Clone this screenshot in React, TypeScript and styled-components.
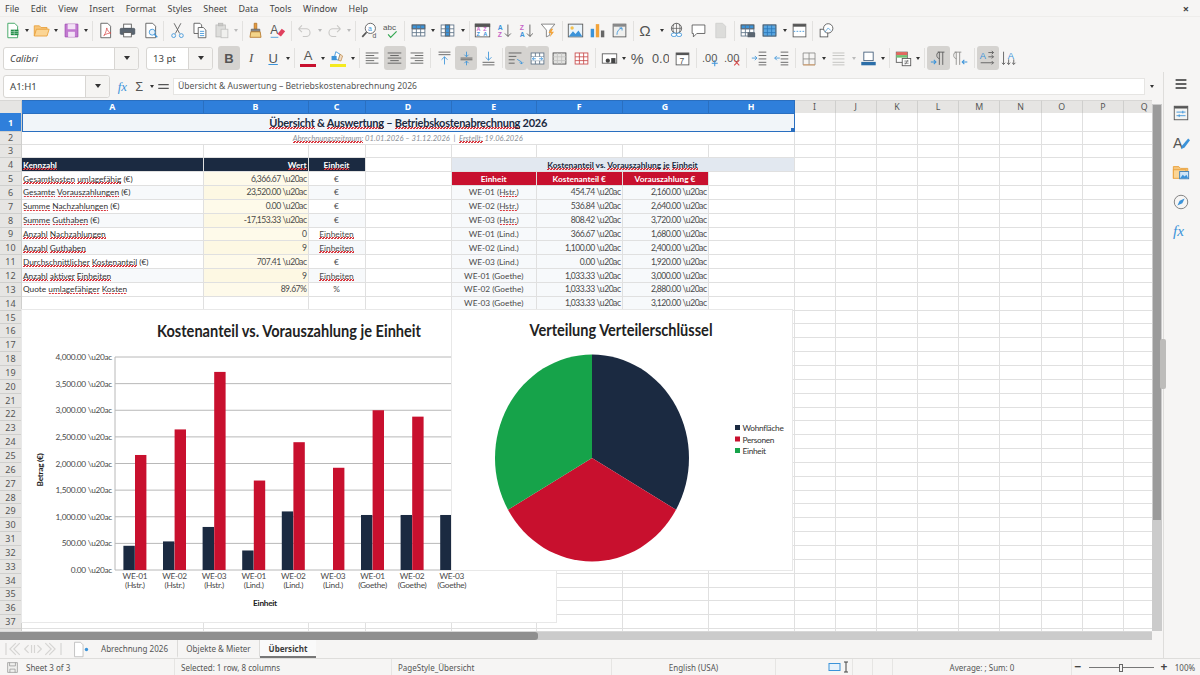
import type { ReactNode } from "react";
import styled, { createGlobalStyle } from "styled-components";

const NAVY = "#1b2a41";
const RED = "#c8102e";
const GREEN = "#16a34a";
const INK = "#555555";
const BLUE = "#3b93d9";
const UI_FONT = `"Noto Sans", "Open Sans", sans-serif`;
const CELL_FONT = `Lato, "Liberation Sans", sans-serif`;

const Global = createGlobalStyle`
    html, body { margin: 0; padding: 0; overflow: hidden; }
    body { background: #f6f5f4; font-family: ${UI_FONT}; color: #3a3a3a; }
`;

const Page = styled.div`
    width: 1200px;
    height: 675px;
    display: flex;
    flex-direction: column;
    overflow: hidden;
    position: relative;
`;

const MenuBar = styled.div`
    height: 17px;
    box-sizing: border-box;
    display: flex;
    align-items: center;
    gap: 11.5px;
    padding: 0 5px;
    font-size: 8.95px;
    color: #444;
    border-bottom: 1px solid #eeedeb;
`;

const CloseMark = styled.span`
    margin-left: auto;
    margin-right: 6px;
    font-size: 11px;
    font-weight: 700;
`;

const ToolRow = styled.div`
    height: 27.5px;
    display: flex;
    align-items: center;
    padding-left: 1px;
    flex: none;
`;

const Tool = styled.div<{ $on?: boolean }>`
    width: 22.05px;
    height: 24px;
    flex: none;
    display: flex;
    align-items: center;
    justify-content: center;
    border-radius: 3px;
    background: ${(p) => (p.$on ? "#d5d3d0" : "transparent")};
    svg { width: 17px; height: 17px; display: block; }
`;

const Caret = styled.div<{ $dim?: boolean }>`
    width: 7.6px;
    flex: none;
    display: flex;
    justify-content: center;
    &::after {
        content: "";
        border-left: 2.5px solid transparent;
        border-right: 2.5px solid transparent;
        border-top: 3px solid ${(p) => (p.$dim ? "#bbb" : "#333")};
    }
`;

const Divider = styled.div<{ $wide?: boolean }>`
    width: ${(p) => (p.$wide ? 5.35 : 5)}px;
    height: 20px;
    flex: none;
    display: flex;
    justify-content: center;
    &::after { content: ""; width: 1px; background: #e2e1df; }
`;

const Combo = styled.div<{ $w: number; $gap?: number }>`
    width: ${(p) => p.$w}px;
    height: 23px;
    margin-left: ${(p) => p.$gap ?? 0}px;
    margin-right: 5px;
    flex: none;
    display: flex;
    background: #fff;
    border: 1px solid #d8d6d3;
    border-radius: 3px;
    box-sizing: border-box;
    font-size: 9.6px;
    color: #444;
`;

const ComboText = styled.div<{ $italic?: boolean }>`
    flex: 1;
    display: flex;
    align-items: center;
    padding-left: 6px;
    font-style: ${(p) => (p.$italic ? "italic" : "normal")};
`;

const ComboButton = styled.div`
    width: 23px;
    flex: none;
    background: #f5f4f2;
    border-left: 1px solid #d8d6d3;
    border-radius: 0 3px 3px 0;
    display: flex;
    align-items: center;
    justify-content: center;
    &::after {
        content: "";
        border-left: 3.5px solid transparent;
        border-right: 3.5px solid transparent;
        border-top: 4px solid #333;
    }
`;

const Workspace = styled.div`
    flex: 1;
    min-height: 0;
    display: flex;
`;

const Center = styled.div`
    flex: 1;
    min-width: 0;
    display: flex;
    flex-direction: column;
`;

const FormulaBar = styled.div`
    height: 28px;
    flex: none;
    display: flex;
    align-items: center;
    padding-left: 3px;
`;

const FormulaSigns = styled.div`
    width: 58px;
    flex: none;
    display: flex;
    align-items: center;
    justify-content: space-around;
    padding: 0 2px 0 2px;
    box-sizing: border-box;
    svg { width: 15px; height: 15px; }
`;

const FormulaInput = styled.div`
    width: 972px;
    height: 17px;
    flex: none;
    background: #fff;
    border: 1px solid #e6e5e3;
    box-sizing: border-box;
    font-size: 8.6px;
    color: #555;
    display: flex;
    align-items: center;
    padding-left: 4px;
`;

const FormulaCaret = styled(Caret)`
    width: 14px;
`;

const SheetRow = styled.div`
    flex: 1;
    min-height: 0;
    display: flex;
`;

const SheetPane = styled.div`
    position: relative;
    width: 1152px;
    overflow: hidden;
    background: #fff;
`;

const Grid = styled.div`
    display: grid;
    grid-template-columns: 22px 181.5px 105px 57px 86px 85.5px 85.5px 86px 86px repeat(9, 41.2px);
    grid-template-rows: 13px 19px 12.5px repeat(36, 13.85px);
    width: 1165px;
    font-family: ${CELL_FONT};
`;

const ColHead = styled.div<{ $on?: boolean }>`
    display: flex;
    align-items: center;
    justify-content: center;
    box-sizing: border-box;
    font-family: ${UI_FONT};
    font-size: 8.8px;
    font-weight: ${(p) => (p.$on ? 700 : 400)};
    color: ${(p) => (p.$on ? "#fff" : "#555")};
    background: ${(p) => (p.$on ? "#2f7fdb" : "#e6e5e3")};
    border-right: 1px solid ${(p) => (p.$on ? "#2a6fc0" : "#cfcfcd")};
    border-top: 1px solid ${(p) => (p.$on ? "#2a6fc0" : "#d8d7d5")};
`;

const RowHead = styled.div<{ $on?: boolean }>`
    display: flex;
    align-items: center;
    justify-content: center;
    box-sizing: border-box;
    font-family: ${UI_FONT};
    font-size: 9px;
    font-weight: ${(p) => (p.$on ? 700 : 400)};
    color: ${(p) => (p.$on ? "#fff" : "#555")};
    background: ${(p) => (p.$on ? "#2f7fdb" : "#e6e5e3")};
    border-bottom: 1px solid #cfcfcd;
    border-right: 1px solid #cfcfcd;
`;

const Cell = styled.div<{
    $span?: number;
    $align?: string;
    $bg?: string;
    $color?: string;
    $bold?: boolean;
    $size?: number;
    $tight?: boolean;
}>`
    grid-column: span ${(p) => p.$span ?? 1};
    display: flex;
    align-items: center;
    justify-content: ${(p) => p.$align ?? "flex-start"};
    box-sizing: border-box;
    padding: 0 1px;
    white-space: nowrap;
    overflow: hidden;
    font-size: ${(p) => p.$size ?? (p.$tight ? 8.6 : 8.3)}px;
    font-weight: ${(p) => (p.$bold ? 700 : 400)};
    letter-spacing: ${(p) => (p.$tight ? "-0.5px" : "normal")};
    color: ${(p) => p.$color ?? "#4a4a4a"};
    background: ${(p) => p.$bg ?? "#fff"};
    border-right: 1px solid #e0e0e0;
    border-bottom: 1px solid #e0e0e0;
`;

const TitleCell = styled(Cell)`
    border: 1.5px solid #2a6fc0;
    border-left-width: 1px;
    position: relative;
    letter-spacing: -0.25px;
`;

const SelectHandle = styled.span`
    position: absolute;
    right: -1px;
    bottom: -1px;
    width: 4px;
    height: 4px;
    background: #2a6fc0;
`;

const PeriodText = styled.span`
    font-style: italic;
    white-space: pre;
`;

// gezackte Linie direkt unter der Grundlinie, wie die Rechtschreibprüfung
const Squiggle = styled.span`
    background-image: linear-gradient(135deg, transparent 30%, #d9363e 30%, #d9363e 70%, transparent 70%);
    background-repeat: repeat-x;
    background-position: 0 100%;
    background-size: 3px 1.6px;
`;

const ChartPanel = styled.div<{ $left: number; $top: number; $w: number; $h: number }>`
    position: absolute;
    left: ${(p) => p.$left}px;
    top: ${(p) => p.$top}px;
    width: ${(p) => p.$w}px;
    height: ${(p) => p.$h}px;
    background: #fff;
    box-shadow: 0 0 0 1px #e8e8e8;
    svg { display: block; width: 100%; height: 100%; }
`;

const ChartTitle = styled.text`
    font-family: ${CELL_FONT};
    font-size: 16.2px;
    font-weight: 700;
    fill: #222;
    text-anchor: middle;
`;

const AxisText = styled.text<{ $anchor?: string; $bold?: boolean; $dark?: boolean }>`
    font-family: ${CELL_FONT};
    font-size: 8.3px;
    letter-spacing: -0.3px;
    font-weight: ${(p) => (p.$bold ? 700 : 400)};
    fill: ${(p) => (p.$bold ? "#222" : p.$dark ? "#333" : "#4a4a4a")};
    text-anchor: ${(p) => p.$anchor ?? "middle"};
`;

const VScroll = styled.div`
    width: 10px;
    flex: none;
    background: #cbcbcb;
    position: relative;
    border-top: 4px solid #f6f5f4;
    box-sizing: border-box;
    &::before {
        content: "";
        position: absolute;
        left: 1px;
        right: 1px;
        top: 1px;
        height: 415px;
        background: #9b9b9b;
    }
`;

const HScroll = styled.div`
    height: 8px;
    width: 1152px;
    flex: none;
    background: #cbcbcb;
    border-top: 1px solid #d8d8d8;
    display: flex;
`;

const HThumb = styled.div`
    width: 538px;
    height: 100%;
    background: #8f8f8f;
    border-radius: 0 3px 3px 0;
`;

const TabBar = styled.div`
    height: 18px;
    flex: none;
    display: flex;
    align-items: center;
    font-size: 8.05px;
    color: #555;
`;

const TabNav = styled.div`
    width: 92px;
    height: 100%;
    flex: none;
    display: flex;
    align-items: center;
    padding-left: 5px;
    gap: 6px;
    box-sizing: border-box;
`;

const SheetTab = styled.div<{ $on?: boolean; $w: number }>`
    width: ${(p) => p.$w}px;
    height: 100%;
    flex: none;
    box-sizing: border-box;
    display: flex;
    align-items: center;
    justify-content: center;
    font-weight: ${(p) => (p.$on ? 700 : 400)};
    color: ${(p) => (p.$on ? "#3a3a3a" : "#555")};
    background: ${(p) => (p.$on ? "#fafafa" : "transparent")};
    border-bottom: 2px solid ${(p) => (p.$on ? "#777" : "transparent")};
    border-right: ${(p) => (p.$on ? "none" : "1px solid #dcdbd9")};
`;

const Sidebar = styled.div`
    width: 37px;
    flex: none;
    border-left: 1px solid #dedddb;
    box-sizing: border-box;
    display: flex;
    flex-direction: column;
    align-items: center;
    padding: 0 2px 0 0;
    gap: 6.5px;
    position: relative;
    svg { width: 18px; height: 18px; }
`;

const SideSlot = styled.div`
    height: 23px;
    display: flex;
    align-items: center;
`;

const SideHandle = styled.div`
    position: absolute;
    left: -4px;
    top: 267px;
    width: 6px;
    height: 50px;
    background: #bdbcba;
    border-radius: 2px;
`;

const StatusBar = styled.div`
    height: 17px;
    flex: none;
    display: flex;
    align-items: center;
    font-size: 8px;
    color: #555;
    border-top: 1px solid #dedddb;
    box-sizing: border-box;
`;

const StatusCell = styled.div<{ $w: number; $center?: boolean; $bare?: boolean; $pad?: number }>`
    width: ${(p) => p.$w}px;
    height: 100%;
    flex: none;
    box-sizing: border-box;
    display: flex;
    align-items: center;
    gap: 7px;
    padding-left: ${(p) => p.$pad ?? (p.$center ? 0 : 6)}px;
    justify-content: ${(p) => (p.$center ? "center" : "flex-start")};
    border-right: ${(p) => (p.$bare ? "none" : "1px solid #e6e5e3")};
    svg { flex: none; }
`;

const ZoomTrack = styled.div`
    width: 65px;
    height: 1px;
    background: #777;
    position: relative;
    &::after {
        content: "";
        position: absolute;
        left: 30px;
        top: -3px;
        width: 2px;
        height: 6px;
        border: 1px solid #666;
        background: #f6f5f4;
    }
`;

const ZoomSign = styled.span`
    font-size: 12px;
    font-weight: 700;
    line-height: 1;
    color: #444;
`;

const lines = (rows: number[][], color = INK) => (
    <path d={rows.map(([a, b, y]) => `M${a} ${y}H${b}`).join("")} stroke={color} />
);

const GridIcon = ({ c = INK, hl }: { c?: string; hl?: ReactNode }) => (
    <>
        <rect x="2.5" y="3.5" width="15" height="13" fill="#fff" stroke={c} />
        {hl}
        <path d="M2.5 8h15M2.5 12.5h15M7.5 3.5v13M12.5 3.5v13" stroke={c} />
    </>
);

const icons: Record<string, ReactNode> = {
    new: (<><path d="M4.5 1.5h8l3.5 3.5v13.5H4.5z" fill="#fff" stroke="#2e9e55" /><rect x="8" y="9" width="9" height="6.5" fill="#1d8a45" stroke="none" /><path d="M8 11.2h9M8 13.3h9M12 9v6.5" stroke="#bfe5cc" strokeWidth=".7" /></>),
    open: (<><path d="M1.5 16.5v-12h6l2 2h7v2" fill="#f7c67c" stroke="#e9a03a" /><path d="M1.5 16.5l2.5-8h15l-2.5 8z" fill="#fbd595" stroke="#e9a03a" /></>),
    save: (<><path d="M2.5 2.5h15v15h-15z" fill="#c27ad1" stroke="#a04bb3" /><rect x="5.5" y="2.5" width="9" height="6" fill="#f3e2f6" stroke="none" /><rect x="6" y="11.5" width="8" height="6" fill="#f3e2f6" stroke="none" /></>),
    pdf: (<><path d="M4.5 1.5h8l3.5 3.5v13.5H4.5z" fill="#fff" /><path d="M8 16c3-3 3-8 3.5-9 .8 3 2 5 5 6-3 0-6 1-8.5 3z" stroke="#d94a4a" strokeWidth=".9" /></>),
    print: (<><rect x="5.5" y="2.5" width="9" height="5" fill="#fff" /><rect x="1.5" y="7.5" width="17" height="7" rx="1" fill="#5a6570" stroke="#4a5560" /><rect x="5.5" y="12.5" width="9" height="5" fill="#fff" /></>),
    preview: (<><path d="M4.5 1.5h8l3.5 3.5v13.5H4.5z" fill="#fff" /><circle cx="12" cy="12" r="3.5" stroke={BLUE} fill="#e7f2fb" /><path d="M14.5 14.5l3.5 3.5" stroke={BLUE} strokeWidth="1.5" /></>),
    cut: (<><path d="M6 1.5l6.5 12M14 1.5l-6.5 12" /><circle cx="5.5" cy="16" r="2.3" stroke={BLUE} /><circle cx="14.5" cy="16" r="2.3" stroke={BLUE} /></>),
    copy: (<><path d="M3.5 1.5h7l2 2v10h-9z" fill="#fff" /><path d="M8.5 6.5h6l3 3v9h-9z" fill="#fff" />{lines([[10.5, 15.5, 11], [10.5, 15.5, 13.5], [10.5, 15.5, 16]], BLUE)}</>),
    paste: (<><rect x="3.5" y="3.5" width="11" height="14" fill="#dededc" stroke="#bcbcba" /><rect x="6.5" y="1.5" width="5" height="3" fill="#c9c9c7" stroke="#bcbcba" /><rect x="9.5" y="8.5" width="8" height="10" fill="#f0f0ee" stroke="#c4c4c2" /></>),
    brush: (<><path d="M8.5 1.5h3v7h-3z" fill="#e89a3c" stroke="#b5772a" /><path d="M5 8.5h10v3H5z" fill="#888" stroke="#666" /><path d="M4.5 11.5h11l1 6.5h-13z" fill="#f4d58a" stroke="#b5772a" /></>),
    marker: (<><path d="M8 2l5 3-2 7-5-2z" fill="#fff" stroke={BLUE} /><path d="M3 7h6v5H3z" fill={BLUE} stroke="none" /><path d="M13 5l3 2-2 6-3-1z" fill="#f2dcc4" stroke="#b5772a" strokeWidth=".7" /></>),
    clear: (<><text x="1.5" y="14" fontFamily="Liberation Sans" fontSize="14" fill={INK} stroke="none">A</text><path d="M10 14l5-6 4 3-5 6z" fill="#e0405e" stroke="none" /><path d="M2 18h9" stroke={BLUE} /></>),
    undo: (<path d="M3 8h9a4.5 4.5 0 010 9H8M3 8l4-4M3 8l4 4" stroke="#c9c8c6" strokeWidth="1.3" />),
    redo: (<path d="M17 8H8a4.5 4.5 0 000 9h4M17 8l-4-4M17 8l-4 4" stroke="#c9c8c6" strokeWidth="1.3" />),
    find: (<><circle cx="11" cy="7.5" r="6" fill="#fff" /><path d="M6.5 12l-5 5.5" strokeWidth="2" /><text x="8.3" y="10" fontFamily="Liberation Sans" fontSize="8" fill={BLUE} stroke="none">a</text><text x="13.5" y="18.5" fontFamily="Liberation Sans" fontSize="8" fill={INK} stroke="none">d</text></>),
    spell: (<><text x="0" y="9.5" fontFamily="Liberation Sans" fontSize="9.5" fill={INK} stroke="none">abc</text><path d="M6 14.5l3 3.5 7-7" stroke="#35a853" strokeWidth="1.4" /></>),
    rows: <GridIcon c="#5c7186" hl={<rect x="2.5" y="3.5" width="15" height="4.5" fill={BLUE} />} />,
    cols: <GridIcon c="#5c7186" hl={<rect x="7.5" y="3.5" width="5" height="13" fill={BLUE} />} />,
    sort: (<><rect x="1.5" y="2.5" width="17" height="15" fill="#fff" /><rect x="1.5" y="2.5" width="17" height="3" fill="#555" /><text x="3" y="11" fontFamily="Liberation Sans" fontWeight="700" fontSize="6.5" fill="#c765c7" stroke="none">A</text><text x="3" y="17" fontFamily="Liberation Sans" fontWeight="700" fontSize="6.5" fill={BLUE} stroke="none">Z</text><text x="11" y="11" fontFamily="Liberation Sans" fontWeight="700" fontSize="6.5" fill="#c765c7" stroke="none">Z</text><text x="11" y="17" fontFamily="Liberation Sans" fontWeight="700" fontSize="6.5" fill={BLUE} stroke="none">A</text></>),
    asc: (<><text x="2" y="9" fontFamily="Liberation Sans" fontWeight="700" fontSize="8" fill={BLUE} stroke="none">A</text><text x="2" y="18" fontFamily="Liberation Sans" fontWeight="700" fontSize="8" fill="#c765c7" stroke="none">Z</text><path d="M14 3v14M10.5 13.5L14 17l3.5-3.5" /></>),
    desc: (<><text x="2" y="9" fontFamily="Liberation Sans" fontWeight="700" fontSize="8" fill="#c765c7" stroke="none">Z</text><text x="2" y="18" fontFamily="Liberation Sans" fontWeight="700" fontSize="8" fill={BLUE} stroke="none">A</text><path d="M14 3v14M10.5 13.5L14 17l3.5-3.5" /></>),
    filter: (<><path d="M1.5 2.5h16l-6 7v6l-4 2v-8z" fill="#fff" stroke="#777" /><path d="M13 8l-3 5h3l-1.5 5 5-6.5h-3l2-3.5z" fill="#f2a33a" stroke="none" /></>),
    image: (<><rect x="1.5" y="2.5" width="17" height="15" fill="#eaf4fb" /><circle cx="6" cy="7" r="2" fill="#f4c04e" stroke="none" /><path d="M2 17l5-6 3 3 3.5-4 4.5 7z" fill={BLUE} stroke="none" /></>),
    chart: (<><rect x="2" y="8" width="4" height="10" fill={BLUE} stroke="none" /><rect x="8" y="2.5" width="4" height="15.5" fill="#f2a33a" stroke="none" /><rect x="14" y="10" width="4" height="8" fill="#666" stroke="none" /></>),
    pivot: (<><rect x="2.5" y="2.5" width="15" height="15" fill="#f0f0ee" /><rect x="2.5" y="2.5" width="15" height="3" fill="#888" stroke="none" /><path d="M7 15c0-4 2-7 6-8M13 7h-3M13 7v3" stroke={BLUE} /></>),
    omega: (<text x="1.5" y="16.5" fontFamily="Liberation Sans" fontSize="18" fill={INK} stroke="none">Ω</text>),
    link: (<><circle cx="10" cy="7.5" r="6" /><path d="M4 7.5h12M10 1.5v12M7 2.5c-1.5 3-1.5 7 0 10M13 2.5c1.5 3 1.5 7 0 10" strokeWidth=".8" /><rect x="4" y="13" width="6" height="4" rx="2" fill="#fff" stroke={BLUE} /><rect x="10" y="13" width="6" height="4" rx="2" fill="#fff" stroke={BLUE} /></>),
    note: (<path d="M2.5 3.5h15v10H8l-4 4v-4H2.5z" fill="#fff" />),
    headerDoc: (<path d="M4.5 1.5h8l3.5 3.5v13.5H4.5z" fill="#dcdcda" stroke="#cfcfcd" />),
    printArea: (<><GridIcon c="#5c7186" hl={<rect x="2.5" y="3.5" width="15" height="4.5" fill={BLUE} />} /><rect x="10" y="12" width="9" height="6" rx="1" fill="#5a6570" stroke="none" /></>),
    freeze: <GridIcon c="#2b77b8" hl={<rect x="2.5" y="3.5" width="15" height="13" fill="#5aa7e2" />} />,
    split: (<><rect x="2.5" y="2.5" width="15" height="15" fill="#fff" /><rect x="2.5" y="2.5" width="15" height="3" fill="#555" stroke="none" /><path d="M3 11h14" stroke={BLUE} strokeDasharray="2 1.5" /></>),
    shapes: (<><rect x="2.5" y="8.5" width="9" height="9" fill="#fff" /><circle cx="12" cy="7.5" r="5.5" fill="#fff" /><path d="M8 12l4-5 3 3" stroke={BLUE} strokeWidth=".8" /></>),
    left: lines([[2, 17, 3.5], [2, 12, 6.5], [2, 17, 9.5], [2, 12, 12.5], [2, 17, 15.5]]),
    center: lines([[2, 18, 3.5], [5, 15, 6.5], [2, 18, 9.5], [5, 15, 12.5], [2, 18, 15.5]]),
    right: lines([[3, 18, 3.5], [8, 18, 6.5], [3, 18, 9.5], [8, 18, 12.5], [3, 18, 15.5]]),
    top: (<>{lines([[3, 17, 2.5], [3, 17, 5.5]])}<path d="M10 17V8M6.5 11.5L10 8l3.5 3.5" stroke={BLUE} /></>),
    middle: (<>{lines([[3, 17, 9.5], [3, 17, 11.5]])}<path d="M10 2v6M7.5 5.5L10 8l2.5-2.5M10 18v-5M7.5 15.5L10 13l2.5 2.5" stroke={BLUE} /></>),
    bottom: (<>{lines([[3, 17, 14.5], [3, 17, 17.5]])}<path d="M10 2v10M6.5 8.5L10 12l3.5-3.5" stroke={BLUE} /></>),
    wrap: (<>{lines([[2, 17, 3.5], [2, 11, 7.5], [2, 9, 11.5], [2, 9, 15.5]])}<path d="M12 11l5 3v2.5M15 14.5l2 2 2-2" stroke={BLUE} /></>),
    merge: (<><GridIcon c="#5c7186" /><rect x="3" y="8" width="14" height="4.5" fill="#fff" stroke="none" /><path d="M4 10.3h4M16 10.3h-4M6 8.5l-2 1.8 2 1.8M14 8.5l2 1.8-2 1.8" stroke={BLUE} /></>),
    mergeOff: <GridIcon c="#c2c2c0" hl={<rect x="2.5" y="3.5" width="15" height="13" fill="#e3e3e1" />} />,
    splitCell: <GridIcon c="#c94a4a" />,
    money: (<><rect x="1.5" y="4.5" width="17" height="11" fill="#fff" /><circle cx="8" cy="12.5" r="2.5" fill="#444" stroke="none" /><rect x="12" y="9.5" width="5" height="6" fill="#444" stroke="none" /></>),
    percent: (<text x="1" y="16" fontFamily="Liberation Sans" fontSize="17" fill={INK} stroke="none">%</text>),
    number: (<text x="0" y="15" fontFamily="Liberation Sans" fontSize="15" fill={INK} stroke="none">0.0</text>),
    date: (<><rect x="2.5" y="3.5" width="15" height="14" fill="#fff" /><rect x="2.5" y="3.5" width="15" height="2.5" fill="#555" stroke="none" /><text x="6.5" y="16" fontFamily="Liberation Sans" fontSize="10" fill={INK} stroke="none">7</text></>),
    addDec: (<><text x="0" y="14" fontFamily="Liberation Sans" fontSize="13" fill={INK} stroke="none">.00</text><path d="M15 12v7M11.5 15.5h7" stroke={BLUE} strokeWidth="1.2" /></>),
    delDec: (<><text x="0" y="14" fontFamily="Liberation Sans" fontSize="13" fill={INK} stroke="none">.00</text><path d="M12 12l6 6M18 12l-6 6" stroke="#d94a4a" strokeWidth="1.2" /></>),
    indent: (<>{lines([[9, 18, 2.5], [9, 18, 6.5], [9, 18, 10.5], [9, 18, 14.5], [9, 18, 17.5]])}<path d="M1 9.5h6M4.5 7L7 9.5 4.5 12" stroke={BLUE} /></>),
    outdent: (<>{lines([[9, 18, 2.5], [9, 18, 6.5], [9, 18, 10.5], [9, 18, 14.5], [9, 18, 17.5]])}<path d="M8 9.5H2M4.5 7L2 9.5 4.5 12" stroke={BLUE} /></>),
    border: (<><path d="M2.5 3.5h14v14h-14zM9.5 3.5v14M2.5 10.5h14" stroke="#8a8a88" /><path d="M2.5 17.5h14" stroke="#e09a5a" /></>),
    borderStyle: lines([[3, 17, 3.5], [3, 17, 6.5], [3, 17, 10.5], [3, 17, 14.5], [3, 17, 17.5]], "#bdbdbb"),
    borderColor: (<><rect x="4.5" y="2.5" width="11" height="10" fill="#fff" stroke="#3f5a77" /><rect x="1.5" y="14" width="17" height="4" fill="#2b6ea8" stroke="none" /></>),
    cond: (<><rect x="1.5" y="2.5" width="13" height="12" fill="#fff" /><rect x="1.5" y="2.5" width="13" height="3.5" fill="#e2685f" stroke="none" /><rect x="1.5" y="6" width="13" height="3" fill="#6fbf73" stroke="none" /><rect x="8.5" y="10" width="10" height="8.5" fill="#fff" /><path d="M11 13h5M11 15.5h5M15 12l-3 5" strokeWidth=".8" /></>),
    ltr: (<><path d="M9 2.5h8M11 2.5v15M15 2.5v15M11 10C7 10 7 2.5 11 2.5" /><path d="M1 14h6M4.5 11.5L7 14l-2.5 2.5" stroke={BLUE} strokeWidth="1.2" /></>),
    rtl: (<><path d="M3 2.5h8M5 2.5v15M9 2.5v15M5 10C1 10 1 2.5 5 2.5" stroke="#8a8a88" /><path d="M18 14h-6M14.5 11.5L12 14l2.5 2.5" stroke={BLUE} strokeWidth="1.2" /></>),
    horiz: (<><text x="1" y="10" fontFamily="Liberation Sans" fontSize="11" fill={BLUE} stroke="none">A</text><path d="M11 3h6M15 1l2 2-2 2M11 8h6M15 6l2 2-2 2M2 15h15M15 13l2 2-2 2" /></>),
    vert: (<><text x="8" y="10" fontFamily="Liberation Sans" fontSize="11" fill={BLUE} stroke="none">A</text><path d="M3 2v15M1 15l2 2 2-2M9 11v6M7 15l2 2 2-2M15 11v6M13 15l2 2 2-2" /></>),
    hamburger: <path d="M4 5.5h12M4 10h12M4 14.5h12" stroke="#333" strokeWidth="1.6" />,
    props: (<><rect x="2.5" y="2.5" width="15" height="15" fill="#f4f4f2" /><rect x="2.5" y="2.5" width="15" height="2.5" fill="#555" stroke="none" /><path d="M5 9h10M5 13h10" stroke={BLUE} /><path d="M12 7.5v3M8 11.5v3" stroke={BLUE} /></>),
    styles: (<><text x="1" y="15" fontFamily="Liberation Sans" fontSize="16" fill={INK} stroke="none">A</text><path d="M18 5l-7 8-1 4 4-2 6-8z" fill={BLUE} stroke="none" /></>),
    gallery: (<><path d="M1.5 17v-13h6l2 2h8v3" fill="#f7c67c" stroke="#e9a03a" /><rect x="1.5" y="7.5" width="14" height="9.5" fill="#fbd595" stroke="#e9a03a" /><rect x="8.5" y="9.5" width="10" height="8" fill="#cfe5f6" stroke="#3f7fb5" /><path d="M9 17l3-4 2 2 2-2 2 4z" fill={BLUE} stroke="none" /></>),
    compass: (<><circle cx="10" cy="10" r="7.5" stroke="#777" /><path d="M14 6l-2.5 5.5L6 14l2.5-5.5z" fill={BLUE} stroke="none" /></>),
    fx: (<text x="1" y="16" fontFamily="Liberation Serif" fontStyle="italic" fontSize="17" fill={BLUE} stroke="none">fx</text>),
    sigma: (<text x="3" y="16" fontFamily="Liberation Sans" fontSize="17" fill={INK} stroke="none">Σ</text>),
    equals: <path d="M3 7.5h14M3 12.5h14" stroke={INK} strokeWidth="1.6" />,
    floppy: (<><path d="M2.5 2.5h15v15h-15z" fill="#f0f0ee" stroke="#888" /><path d="M5.5 2.5v5h9v-5M6 17.5v-5h8v5" stroke="#888" /></>),
    sheetAdd: (<><path d="M3 1.5h7l3 3v14H3z" fill="#fff" stroke="#bbb" /><circle cx="17" cy="10" r="2" fill={BLUE} stroke="none" /></>),
};

const Icon = ({ name }: { name: string }) => (
    <svg viewBox="0 0 20 20" fill="none" stroke={INK} strokeWidth="1">
        {icons[name]}
    </svg>
);

const LetterTool = styled(Tool)<{ $italic?: boolean; $under?: boolean; $heavy?: boolean }>`
    font-family: ${(p) => (p.$italic ? `"Liberation Serif", serif` : `"Liberation Sans", sans-serif`)};
    font-size: 13px;
    font-weight: ${(p) => (p.$heavy ? 700 : 400)};
    font-style: ${(p) => (p.$italic ? "italic" : "normal")};
    text-decoration: ${(p) => (p.$under ? "underline" : "none")};
    text-decoration-color: ${BLUE};
    color: #555;
`;

const ColorTool = styled(Tool)<{ $bar: string }>`
    position: relative;
    &::after {
        content: "";
        position: absolute;
        left: 3px;
        right: 3px;
        bottom: 3px;
        height: 3px;
        background: ${(p) => p.$bar};
    }
`;

const ColorLetter = styled.span`
    font-family: "Liberation Sans", sans-serif;
    font-size: 13px;
    margin-top: -5px;
    color: #555;
`;

function renderTools(list: string[], wide = false) {
    return list.map((t, i) => {
        if (t === "v") return <Caret key={i} />;
        if (t === "v-") return <Caret key={i} $dim />;
        if (t === "|") return <Divider key={i} $wide={wide} />;
        if (t === "bold") return <LetterTool key={i} $on $heavy>B</LetterTool>;
        if (t === "italic") return <LetterTool key={i} $italic>I</LetterTool>;
        if (t === "under") return <LetterTool key={i} $under>U</LetterTool>;
        if (t === "fontColor") return <ColorTool key={i} $bar={RED}><ColorLetter>A</ColorLetter></ColorTool>;
        if (t === "hilite") return <ColorTool key={i} $bar="#f5ea20"><Icon name="marker" /></ColorTool>;
        const on = t.endsWith("*");
        return <Tool key={i} $on={on}><Icon name={on ? t.slice(0, -1) : t} /></Tool>;
    });
}

const toolsTop = ["new", "v", "open", "v", "save", "v", "|", "pdf", "print", "preview", "|", "cut", "copy", "paste", "v-", "|", "brush", "clear", "|", "undo", "v-", "redo", "v-", "|", "find", "spell", "|", "rows", "v", "cols", "v", "|", "sort", "asc", "desc", "filter", "|", "image", "chart", "pivot", "|", "omega", "v", "link", "note", "headerDoc", "|", "printArea", "freeze", "v", "split", "|", "shapes"];
const toolsBottom = ["bold", "italic", "under", "v", "|", "fontColor", "v", "hilite", "v", "|", "left", "center*", "right", "|", "top", "middle*", "bottom", "|", "wrap*", "merge*", "mergeOff", "splitCell", "|", "money", "v", "percent", "number", "date", "|", "addDec", "delDec", "|", "indent", "outdent", "|", "border", "v", "borderStyle", "v-", "borderColor", "v", "|", "cond", "v", "|", "ltr*", "rtl", "|", "horiz*", "vert"];

// ~wort~ bekommt die rote Rechtschreib-Welle
function spell(text: string) {
    return <span>{text.split("~").map((part, i) => (i % 2 ? <Squiggle key={i}>{part}</Squiggle> : part))}</span>;
}

const EUR = "\\u20ac";
const summary = [
    ["~Gesamtkosten~ ~umlagefähig~ (€)", `6,366.67 ${EUR}`, "€"],
    ["~Gesamte~ ~Vorauszahlungen~ (€)", `23,520.00 ${EUR}`, "€"],
    ["~Summe~ ~Nachzahlungen~ (€)", `0.00 ${EUR}`, "€"],
    ["~Summe~ ~Guthaben~ (€)", `-17,153.33 ${EUR}`, "€"],
    ["~Anzahl~ ~Nachzahlungen~", "0", "~Einheiten~"],
    ["~Anzahl~ ~Guthaben~", "9", "~Einheiten~"],
    ["~Durchschnittlicher~ ~Kostenanteil~ (€)", `707.41 ${EUR}`, "€"],
    ["~Anzahl~ ~aktiver~ ~Einheiten~", "9", "~Einheiten~"],
    ["Quote ~umlagefähiger~ ~Kosten~", "89.67%", "%"],
];
const units = [
    ["WE-01 (~Hstr.~)", 454.74, 2160],
    ["WE-02 (~Hstr.~)", 536.84, 2640],
    ["WE-03 (~Hstr.~)", 808.42, 3720],
    ["WE-01 (Lind.)", 366.67, 1680],
    ["WE-02 (Lind.)", 1100, 2400],
    ["WE-03 (Lind.)", 0, 1920],
    ["WE-01 (Goethe)", 1033.33, 3000],
    ["WE-02 (Goethe)", 1033.33, 2880],
    ["WE-03 (Goethe)", 1033.33, 3120],
] as [string, number, number][];

const money = (n: number) => `${n.toLocaleString("en-US", { minimumFractionDigits: 2, maximumFractionDigits: 2 })} ${EUR}`;
const COLS = ["A", "B", "C", "D", "E", "F", "G", "H", "I", "J", "K", "L", "M", "N", "O", "P", "Q"];
const TINT = "#f7f9fb";

const blanks = (n: number) => Array.from({ length: n }, (_, i) => <Cell key={`b${i}`} />);

function SheetRowCells({ row }: { row: number }) {
    if (row === 1) {
        return (
            <>
                <TitleCell $span={8} $align="center" $bold $size={11} $bg="#f1f5f9" $color="#1b2a41">
                    {spell("~Übersicht~ & ~Auswertung~ – ~Betriebskostenabrechnung~ 2026")}
                    <SelectHandle />
                </TitleCell>
                {blanks(9)}
            </>
        );
    }
    if (row === 2) {
        return (
            <>
                <Cell $span={8} $align="center" $size={7.6} $color="#8a8f96">
                    <PeriodText>{spell("~Abrechnungszeitraum:~ 01.01.2026 – 31.12.2026  |  ~Erstellt:~ 19.06.2026")}</PeriodText>
                </Cell>
                {blanks(9)}
            </>
        );
    }
    if (row === 4) {
        return (
            <>
                <Cell $bg={NAVY} $color="#fff" $bold>{spell("~Kennzahl~")}</Cell>
                <Cell $bg={NAVY} $color="#fff" $bold $align="flex-end">{spell("~Wert~")}</Cell>
                <Cell $bg={NAVY} $color="#fff" $bold $align="center">{spell("~Einheit~")}</Cell>
                <Cell />
                <Cell $span={4} $bg="#e2e8f0" $color="#1b2a41" $bold $align="center">
                    {spell("~Kostenanteil~ vs. ~Vorauszahlung~ ~je~ ~Einheit~")}
                </Cell>
                {blanks(9)}
            </>
        );
    }
    const left = row >= 5 && row <= 13 ? summary[row - 5] : null;
    const odd = row % 2 === 0;
    const unit = row >= 6 && row <= 14 ? units[row - 6] : null;
    return (
        <>
            {left ? (
                <>
                    <Cell $bg={odd ? TINT : "#fff"} $color="#333">{spell(left[0])}</Cell>
                    <Cell $bg={odd ? "#fdf8e3" : "#fefaea"} $align="flex-end" $tight>{left[1]}</Cell>
                    <Cell $bg={odd ? TINT : "#fff"} $align="center">{spell(left[2])}</Cell>
                </>
            ) : blanks(3)}
            <Cell />
            {row === 5 ? (
                <>
                    <Cell $bg={RED} $color="#fff" $bold $align="center">Einheit</Cell>
                    <Cell $bg={RED} $color="#fff" $bold $align="center">Kostenanteil €</Cell>
                    <Cell $bg={RED} $color="#fff" $bold $align="center">Vorauszahlung €</Cell>
                </>
            ) : unit ? (
                <>
                    <Cell $bg={TINT} $align="center">{spell(unit[0])}</Cell>
                    <Cell $bg={TINT} $align="flex-end" $tight>{money(unit[1])}</Cell>
                    <Cell $bg={TINT} $align="flex-end" $tight>{money(unit[2])}</Cell>
                </>
            ) : blanks(3)}
            {blanks(10)}
        </>
    );
}

const yTicks = [0, 500, 1000, 1500, 2000, 2500, 3000, 3500, 4000];
const toY = (v: number) => 570 - (v / 4000) * 213;

function CostChart() {
    return (
        <ChartPanel $left={22} $top={210} $w={534} $h={312}>
            <svg viewBox="22 310 534 312">
                <ChartTitle x="289" y="337" textLength="264" lengthAdjust="spacingAndGlyphs">Kostenanteil vs. Vorauszahlung je Einheit</ChartTitle>
                {yTicks.map((v) => (
                    <g key={v}>
                        <line x1="115" x2="470" y1={toY(v)} y2={toY(v)} stroke="#b8b8b8" />
                        <AxisText x="112" y={toY(v) + 3} $anchor="end">{money(v)}</AxisText>
                    </g>
                ))}
                <line x1="115" x2="115" y1="357" y2="570" stroke="#b8b8b8" />
                {units.map(([name, cost, prepaid], i) => {
                    const x = 123.4 + i * 39.6;
                    const [id, place] = name.replace(/~/g, "").split(" ");
                    return (
                        <g key={name}>
                            <rect x={x} y={toY(cost)} width="11.4" height={570 - toY(cost)} fill={NAVY} />
                            <rect x={x + 11.6} y={toY(prepaid)} width="11.4" height={570 - toY(prepaid)} fill={RED} />
                            <AxisText x={x + 11.5} y="579">{id}</AxisText>
                            <AxisText x={x + 11.5} y="588">{place}</AxisText>
                        </g>
                    );
                })}
                <AxisText x="265" y="606" $bold>Einheit</AxisText>
                <AxisText x="0" y="0" $bold transform="translate(43 470) rotate(-90)">Betrag (€)</AxisText>
            </svg>
        </ChartPanel>
    );
}

// Kreis ist im Original leicht gestreckt
const wedge = (a: number, b: number) => {
    const pt = (d: number) => {
        const r = (d * Math.PI) / 180;
        return `${592 + 97 * Math.sin(r)} ${458 - 103.5 * Math.cos(r)}`;
    };
    return `M592 458L${pt(a)}A97 103.5 0 0 1 ${pt(b)}Z`;
};

function ShareChart() {
    const legend = [["Wohnfläche", NAVY], ["Personen", RED], ["Einheit", GREEN]];
    return (
        <ChartPanel $left={452} $top={210} $w={340} $h={260}>
            <svg viewBox="452 310 340 260">
                <ChartTitle x="621" y="336" textLength="183" lengthAdjust="spacingAndGlyphs">Verteilung Verteilerschlüssel</ChartTitle>
                <path d={wedge(0, 120)} fill={NAVY} />
                <path d={wedge(120, 240)} fill={RED} />
                <path d={wedge(240, 360)} fill={GREEN} />
                {legend.map(([label, color], i) => (
                    <g key={label}>
                        <rect x="735" y={425 + i * 11.5} width="5" height="5" fill={color} />
                        <AxisText x="742.5" y={431 + i * 11.5} $anchor="start" $dark>{label}</AxisText>
                    </g>
                ))}
            </svg>
        </ChartPanel>
    );
}

const NavArrows = () => (
    <svg width="60" height="14" viewBox="0 0 60 14" fill="none" stroke="#d6d5d3" strokeWidth="1.2">
        <path d="M1 1v12M11 1L5 7l6 6M15 1L9 7l6 6M24 3l-4 4 4 4M27 3v8M33 3l4 4-4 4M30 3v8M45 1l6 6-6 6M41 1l6 6-6 6M57 1v12" />
    </svg>
);

export default function App() {
    return (
        <Page>
            <Global />
            <MenuBar>
                {["File", "Edit", "View", "Insert", "Format", "Styles", "Sheet", "Data", "Tools", "Window", "Help"].map((m) => (
                    <span key={m}>{m}</span>
                ))}
                <CloseMark>×</CloseMark>
            </MenuBar>
            <ToolRow>{renderTools(toolsTop)}</ToolRow>
            <ToolRow>
                <Combo $w={136} $gap={2}>
                    <ComboText $italic>Calibri</ComboText>
                    <ComboButton />
                </Combo>
                <Combo $w={67} $gap={2}>
                    <ComboText>13 pt</ComboText>
                    <ComboButton />
                </Combo>
                {renderTools(toolsBottom, true)}
            </ToolRow>
            <Workspace>
                <Center>
                    <FormulaBar>
                        <Combo $w={107}>
                            <ComboText>A1:H1</ComboText>
                            <ComboButton />
                        </Combo>
                        <FormulaSigns>
                            <Icon name="fx" />
                            <Icon name="sigma" />
                            <Caret />
                            <Icon name="equals" />
                        </FormulaSigns>
                        <FormulaInput>Übersicht &amp; Auswertung – Betriebskostenabrechnung 2026</FormulaInput>
                        <FormulaCaret />
                    </FormulaBar>
                    <SheetRow>
                        <SheetPane>
                            <Grid>
                                <ColHead />
                                {COLS.map((c, i) => (
                                    <ColHead key={c} $on={i < 8}>{c}</ColHead>
                                ))}
                                {Array.from({ length: 38 }, (_, i) => i + 1).map((row) => (
                                    <Row key={row} row={row} />
                                ))}
                            </Grid>
                            <CostChart />
                            <ShareChart />
                        </SheetPane>
                        <VScroll />
                    </SheetRow>
                    <HScroll><HThumb /></HScroll>
                    <TabBar>
                        <TabNav>
                            <NavArrows />
                            <Tool><Icon name="sheetAdd" /></Tool>
                        </TabNav>
                        <SheetTab $w={86}>Abrechnung 2026</SheetTab>
                        <SheetTab $w={82}>Objekte &amp; Mieter</SheetTab>
                        <SheetTab $w={56} $on>Übersicht</SheetTab>
                    </TabBar>
                </Center>
                <Sidebar>
                    <SideHandle />
                    {["hamburger", "props", "styles", "gallery", "compass", "fx"].map((n) => (
                        <SideSlot key={n}><Icon name={n} /></SideSlot>
                    ))}
                </Sidebar>
            </Workspace>
            <StatusBar>
                <StatusCell $w={175}>
                    <svg width="13" height="13" viewBox="0 0 20 20" fill="none" stroke={INK}>{icons.floppy}</svg>
                    <span>Sheet 3 of 3</span>
                </StatusCell>
                <StatusCell $w={217}>Selected: 1 row, 8 columns</StatusCell>
                <StatusCell $w={220}>PageStyle_Übersicht</StatusCell>
                <StatusCell $w={164} $center>English (USA)</StatusCell>
                <StatusCell $w={77} $pad={47}>
                    <svg width="30" height="12" viewBox="0 0 30 12" fill="none">
                        <rect x="6" y="2.5" width="11" height="7" stroke={BLUE} fill="#e7f2fb" />
                        <path d="M21 1h4M21 11h4M23 1v10" stroke="#444" />
                    </svg>
                </StatusCell>
                <StatusCell $w={20} />
                <StatusCell $w={20} />
                <StatusCell $w={179} $center>Average: ; Sum: 0</StatusCell>
                <StatusCell $w={98} $center $bare>
                    <ZoomSign>−</ZoomSign>
                    <ZoomTrack />
                    <ZoomSign>+</ZoomSign>
                </StatusCell>
                <StatusCell $w={30} $center $bare>100%</StatusCell>
            </StatusBar>
        </Page>
    );
}

function Row({ row }: { row: number }) {
    return (
        <>
            <RowHead $on={row === 1}>{row}</RowHead>
            <SheetRowCells row={row} />
        </>
    );
}
